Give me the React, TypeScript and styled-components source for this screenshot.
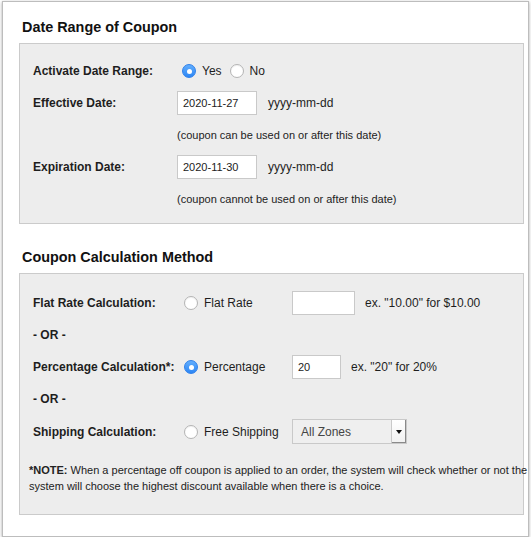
import * as React from "react";
import styled, { createGlobalStyle, css } from "styled-components";

const GlobalStyle = createGlobalStyle`
  body {
    margin: 0;
    background: #ffffff;
    font-family: "Liberation Sans", Arial, Helvetica, sans-serif;
    color: #1e1e1e;
  }
`;

const Card = styled.div`
  width: 527px;
  margin: 1px 0 0 2px;
  box-sizing: border-box;
  background: #fff;
  border: 1px solid #bdbdbd;
  box-shadow: 0 1px 3px rgba(0, 0, 0, 0.35);
  padding: 16px 3px 21px 16px;
`;

const Heading = styled.h2<{ $first?: boolean }>`
  margin: ${(p) => (p.$first ? "0 0 7px" : "24px 0 7px")};
  padding-left: 3px;
  font-size: 14.4px;
  line-height: 18px;
  font-weight: 700;
  color: #111;
`;

const Panel = styled.section<{ $pad: string }>`
  background: #ededed;
  border: 1px solid #cbcbcb;
  box-sizing: border-box;
  width: 505px;
  padding: ${(p) => p.$pad};
  display: grid;
  row-gap: 8px;
`;

const Row = styled.div<{ $label: number }>`
  display: grid;
  grid-template-columns: ${(p) => p.$label}px auto;
  align-items: center;
  height: 24px;
`;

const ChoiceRow = styled.div`
  display: grid;
  grid-template-columns: 146px 113px auto;
  align-items: center;
  height: 24px;
`;

const Label = styled.div`
  font-size: 12px;
  font-weight: 700;
  color: #1e1e1e;
  white-space: nowrap;
`;

const Controls = styled.div`
  display: flex;
  align-items: center;
`;

const RadioDot = styled.span<{ $checked?: boolean }>`
  width: 14px;
  height: 14px;
  flex: none;
  box-sizing: border-box;
  border-radius: 50%;
  margin-left: 5px;
  display: flex;
  align-items: center;
  justify-content: center;
  ${(p) =>
    p.$checked
      ? css`
          background: linear-gradient(#62aefd, #2c86f5);
          border: 1px solid #2f80ea;
          &::after {
            content: "";
            width: 5px;
            height: 5px;
            border-radius: 50%;
            background: #fff;
          }
        `
      : css`
          background: #fff;
          border: 1px solid #b4b4b4;
          box-shadow: inset 0 1px 1px rgba(0, 0, 0, 0.06);
        `}
`;

const RadioText = styled.span<{ $gap?: number }>`
  font-size: 12px;
  margin-left: 6px;
  margin-right: ${(p) => p.$gap ?? 0}px;
  color: #1e1e1e;
  white-space: nowrap;
`;

const TextInput = styled.input<{ $w: number }>`
  width: ${(p) => p.$w}px;
  height: 24px;
  box-sizing: border-box;
  border: 1px solid #c9c9c9;
  background: #fff;
  padding: 0 5px;
  font-family: "Liberation Sans", Arial, sans-serif;
  font-size: 11px;
  color: #222;
  outline: none;
`;

const Hint = styled.span<{ $gap: number }>`
  margin-left: ${(p) => p.$gap}px;
  font-size: 12px;
  color: #1e1e1e;
  white-space: nowrap;
`;

const Small = styled.div`
  font-size: 11px;
  color: #222;
  white-space: nowrap;
`;

const Or = styled.div`
  font-size: 12px;
  font-weight: 700;
  height: 24px;
  display: flex;
  align-items: center;
`;

const Select = styled.div`
  width: 115px;
  height: 25px;
  box-sizing: border-box;
  border: 1px solid #c9c9c9;
  background: #efefef;
  display: flex;
  align-items: stretch;
`;

const SelectValue = styled.span`
  flex: 1;
  display: flex;
  align-items: center;
  padding-left: 8px;
  font-size: 12px;
  color: #444;
`;

const SelectArrow = styled.span`
  width: 14px;
  background: linear-gradient(#ffffff, #f1f1f1);
  border-left: 1px solid #c9c9c9;
  box-shadow: inset -1px -1px 0 #8a8a8a;
  display: flex;
  align-items: center;
  justify-content: center;
  &::after {
    content: "";
    border-left: 3px solid transparent;
    border-right: 3px solid transparent;
    border-top: 4px solid #111;
    margin-top: 1px;
  }
`;

const Note = styled.p`
  margin: 11px 0 0 -4px;
  font-size: 11px;
  line-height: 16px;
  color: #222;
  white-space: nowrap;
`;

function Radio({ checked, text, gap }: { checked?: boolean; text: string; gap?: number }) {
  return (
    <>
      <RadioDot $checked={checked} />
      <RadioText $gap={gap}>{text}</RadioText>
    </>
  );
}

export default function App() {
  return (
    <>
      <GlobalStyle />
      <Card>
        <Heading $first>Date Range of Coupon</Heading>
        <Panel $pad="15px 10px 12px 13px">
          <Row $label={144}>
            <Label>Activate Date Range:</Label>
            <Controls>
              <Radio checked text="Yes" gap={3} />
              <Radio text="No" />
            </Controls>
          </Row>
          <Row $label={144}>
            <Label>Effective Date:</Label>
            <Controls>
              <TextInput $w={80} defaultValue="2020-11-27" />
              <Hint $gap={11}>yyyy-mm-dd</Hint>
            </Controls>
          </Row>
          <Row $label={144}>
            <span />
            <Small>(coupon can be used on or after this date)</Small>
          </Row>
          <Row $label={144}>
            <Label>Expiration Date:</Label>
            <Controls>
              <TextInput $w={80} defaultValue="2020-11-30" />
              <Hint $gap={11}>yyyy-mm-dd</Hint>
            </Controls>
          </Row>
          <Row $label={144}>
            <span />
            <Small>(coupon cannot be used on or after this date)</Small>
          </Row>
        </Panel>

        <Heading>Coupon Calculation Method</Heading>
        <Panel $pad="17px 10px 20px 13px">
          <ChoiceRow>
            <Label>Flat Rate Calculation:</Label>
            <Controls>
              <Radio text="Flat Rate" />
            </Controls>
            <Controls>
              <TextInput $w={63} defaultValue="" />
              <Hint $gap={10}>ex. "10.00" for $10.00</Hint>
            </Controls>
          </ChoiceRow>
          <Or>- OR -</Or>
          <ChoiceRow>
            <Label>Percentage Calculation*:</Label>
            <Controls>
              <Radio checked text="Percentage" />
            </Controls>
            <Controls>
              <TextInput $w={49} defaultValue="20" />
              <Hint $gap={10}>ex. "20" for 20%</Hint>
            </Controls>
          </ChoiceRow>
          <Or>- OR -</Or>
          <ChoiceRow>
            <Label>Shipping Calculation:</Label>
            <Controls>
              <Radio text="Free Shipping" />
            </Controls>
            <Select>
              <SelectValue>All Zones</SelectValue>
              <SelectArrow />
            </Select>
          </ChoiceRow>
          <Note>
            <b>*NOTE:</b> When a percentage off coupon is applied to an order, the system will check whether or not the
            <br />
            system will choose the highest discount available when there is a choice.
          </Note>
        </Panel>
      </Card>
    </>
  );
}
